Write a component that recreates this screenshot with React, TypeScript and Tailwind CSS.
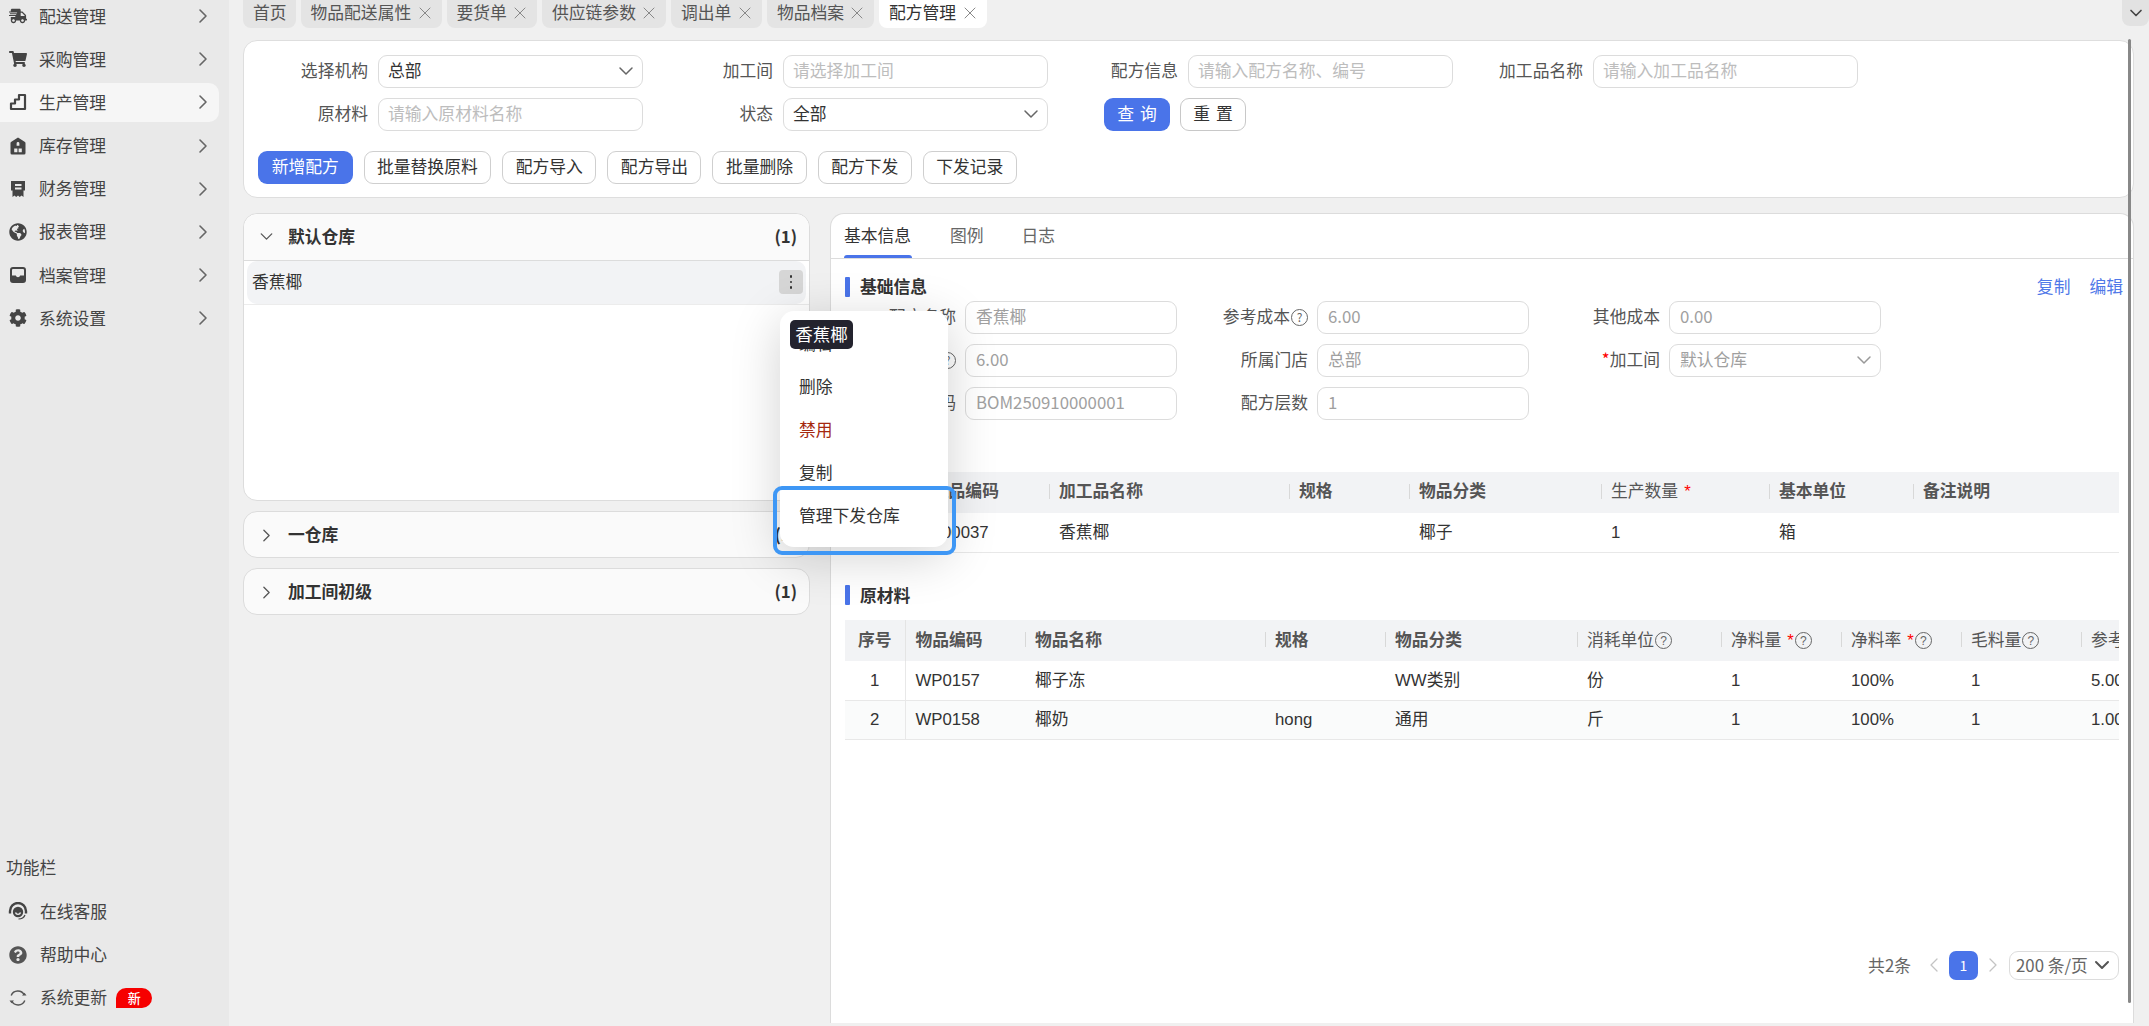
import { ChevronDown, ChevronLeft, ChevronRight, X } from "lucide-react";
import { FaShippingFast, FaShoppingCart, FaGlobeAmericas, FaCog, FaQuestionCircle } from "react-icons/fa";
import type { ReactNode } from "react";

const StairIcon = () => (
  <svg viewBox="0 0 18 18" className="h-[18px] w-[18px]" fill="none" stroke="currentColor" strokeWidth="2.2" strokeLinejoin="round">
    <path d="M2 10.500h4V6.500h4V2h6v14H2z" />
  </svg>
);

const HouseIcon = () => (
  <svg viewBox="0 0 18 18" className="h-[18px] w-[18px]" fill="currentColor">
    <path d="M9 0.500 2.400 4.800A1.500 1.500 0 0 0 1.500 6.200V16a1.500 1.500 0 0 0 1.500 1.500h12a1.500 1.500 0 0 0 1.500-1.500V6.200a1.500 1.500 0 0 0-.9-1.400zM7.600 6.500a1.400 1.400 0 0 1 2.800 0v2.200H7.600zM5.200 11.500h3.200v3.800H5.200zm4.400 0h3.200v3.800H9.600z" fillRule="evenodd" />
  </svg>
);

const LedgerIcon = () => (
  <svg viewBox="0 0 18 18" className="h-[18px] w-[18px]" fill="currentColor">
    <path d="M2 1h14v9.500h-1.500V17l-2-1.500-1.700 1.500-1.800-1.500L7.200 17l-1.700-1.500L3.500 17v-6.500H2zm4 3v2h6.500V4zm0 3.600v2h6.500v-2z" fillRule="evenodd" />
  </svg>
);

const TrayIcon = () => (
  <svg viewBox="0 0 18 18" className="h-[18px] w-[18px]" fill="currentColor">
    <path d="M4 1h10a3 3 0 0 1 3 3v10a3 3 0 0 1-3 3H4a3 3 0 0 1-3-3V4a3 3 0 0 1 3-3zm-1 8.500h3.800a2.300 2.300 0 0 0 4.400 0H15V4a1 1 0 0 0-1-1H4a1 1 0 0 0-1 1z" fillRule="evenodd" />
  </svg>
);

const HeadsetIcon = () => (
  <svg viewBox="0 0 20 20" className="h-[20px] w-[20px]" fill="none" stroke="currentColor">
    <path d="M2 11.500V9a8 8 0 0 1 16 0v2.500" strokeWidth="2.400" />
    <circle cx="10" cy="10" r="5.200" fill="currentColor" stroke="none" />
    <path d="M7.500 10.500a2.600 2.600 0 0 0 5 0" stroke="#e9e9e9" strokeWidth="1.400" />
    <path d="M17 13c-1 2.600-3.500 4-6.500 4" strokeWidth="1.200" />
  </svg>
);

const RefreshIcon = () => (
  <svg viewBox="0 0 20 20" className="h-[20px] w-[20px]" fill="none" stroke="currentColor" strokeWidth="1.500">
    <path d="M3.200 7.500A7.200 7.200 0 0 1 16.300 7M16.800 12.500A7.200 7.200 0 0 1 3.700 13" />
    <path d="M14 7.500h4.500L16.500 4.800zM6 12.500H1.500l2 2.700z" fill="currentColor" stroke="none" />
  </svg>
);

const HelpDot = () => (
  <span className="inline-flex h-[17px] w-[17px] shrink-0 items-center justify-center rounded-full border-[1.500px] border-[#666] text-[12px] leading-none text-[#666]">?</span>
);

const Req = ({ gap }: { gap?: boolean }) => <span className={`text-[#f00] ${gap ? "ml-[5px]" : ""}`}>*</span>;

const navItems: { label: string; icon: ReactNode; active?: boolean }[] = [
  { label: "配送管理", icon: <FaShippingFast className="h-[18px] w-[18px]" /> },
  { label: "采购管理", icon: <FaShoppingCart className="h-[18px] w-[18px]" /> },
  { label: "生产管理", icon: <StairIcon />, active: true },
  { label: "库存管理", icon: <HouseIcon /> },
  { label: "财务管理", icon: <LedgerIcon /> },
  { label: "报表管理", icon: <FaGlobeAmericas className="h-[18px] w-[18px]" /> },
  { label: "档案管理", icon: <TrayIcon /> },
  { label: "系统设置", icon: <FaCog className="h-[18px] w-[18px]" /> },
];

const Sidebar = () => (
  <aside className="flex h-full w-[229px] shrink-0 flex-col bg-[#e9e9e9] text-[#444]">
    <nav className="-mt-[5.500px] flex flex-col">
      {navItems.map((item) => (
        <div key={item.label} className="flex h-[43.200px] items-center">
          <div className={`flex h-[39px] w-[219px] items-center rounded-r-[10px] pl-[9px] pr-[4px] ${item.active ? "bg-[#f6f6f6]" : ""}`}>
            <span className="flex w-[30px] text-[#444]">{item.icon}</span>
            <span className="flex-1">{item.label}</span>
            <ChevronRight className="h-[24px] w-[24px] text-[#666]" strokeWidth={1.600} />
          </div>
        </div>
      ))}
    </nav>
    <div className="mt-auto pb-[7px]">
      <div className="flex h-[45px] items-center pl-[6px]">功能栏</div>
      <div className="flex h-[43px] items-center pl-[8px]">
        <span className="flex w-[32px]"><HeadsetIcon /></span>在线客服
      </div>
      <div className="flex h-[43px] items-center pl-[9px]">
        <span className="flex w-[31px]"><FaQuestionCircle className="h-[18px] w-[18px] text-[#555]" /></span>帮助中心
      </div>
      <div className="flex h-[43px] items-center pl-[8px]">
        <span className="flex w-[32px] text-[#555]"><RefreshIcon /></span>系统更新
        <span className="ml-[9px] flex h-[20px] w-[36px] items-center justify-center rounded-t-[10px] rounded-br-[10px] bg-[#f60000] text-[13px] font-medium text-white">新</span>
      </div>
    </div>
  </aside>
);

const tabs = [
  { label: "首页", width: "w-[52.500px]", closable: false },
  { label: "物品配送属性", width: "w-[141px]", closable: true },
  { label: "要货单", width: "w-[90.500px]", closable: true },
  { label: "供应链参数", width: "w-[124px]", closable: true },
  { label: "调出单", width: "w-[91px]", closable: true },
  { label: "物品档案", width: "w-[107px]", closable: true },
  { label: "配方管理", width: "w-[108px]", closable: true, active: true },
];

const TabBar = () => (
  <div className="flex h-[39.500px] items-start">
    <div className="flex flex-1 gap-[5px]">
      {tabs.map((t) => (
        <div
          key={t.label}
          className={`flex h-[28px] items-center justify-between whitespace-nowrap rounded-b-[8px] pb-[2px] pl-[10px] pr-[7px] ${t.width} ${t.active ? "bg-white text-[#333]" : "bg-[#e4e4e4] text-[#555]"}`}
        >
          <span>{t.label}</span>
          {t.closable && <X className="h-[20px] w-[20px] text-[#888]" strokeWidth={1.200} />}
        </div>
      ))}
    </div>
    <div className="flex h-[26px] w-[27px] items-center justify-center rounded-b-[8px] bg-[#e2e2e2]">
      <ChevronDown className="h-[20px] w-[20px] text-[#444]" strokeWidth={2} />
    </div>
  </div>
);

const Field = ({ placeholder, value, arrow, className }: { placeholder?: string; value?: string; arrow?: boolean; className: string }) => (
  <div className={`flex h-[33px] items-center justify-between rounded-[9px] border border-[#dcdcdc] bg-white pl-[9px] pr-[4px] ${className}`}>
    <span className={value ? "text-[#333]" : "text-[#bdbdbd]"}>{value ?? placeholder}</span>
    {arrow && <ChevronDown className="h-[24px] w-[24px] text-[#666]" strokeWidth={1.500} />}
  </div>
);

const FilterItem = ({ label, children }: { label: string; children: ReactNode }) => (
  <div className="flex items-center">
    <span className="w-[105px] whitespace-nowrap text-right text-[#555]">{label}</span>
    <span className="w-[10px]" />
    {children}
  </div>
);

const actionButtons = ["批量替换原料", "配方导入", "配方导出", "批量删除", "配方下发", "下发记录"];

const FilterCard = () => (
  <section className="mr-[15px] h-[158px] rounded-[14px] border border-[#dedede] bg-white pl-[14px] pt-[14px]">
    <div className="grid grid-cols-[405px_405px_405px_405px] gap-y-[10px] pl-[5px]">
      <FilterItem label="选择机构"><Field value="总部" arrow className="w-[265px]" /></FilterItem>
      <FilterItem label="加工间"><Field placeholder="请选择加工间" className="w-[265px]" /></FilterItem>
      <FilterItem label="配方信息"><Field placeholder="请输入配方名称、编号" className="w-[265px]" /></FilterItem>
      <FilterItem label="加工品名称"><Field placeholder="请输入加工品名称" className="w-[265px]" /></FilterItem>
      <FilterItem label="原材料"><Field placeholder="请输入原材料名称" className="w-[265px]" /></FilterItem>
      <FilterItem label="状态"><Field value="全部" arrow className="w-[265px]" /></FilterItem>
      <div className="flex items-center gap-[10px] pl-[31px]">
        <button className="h-[33px] w-[66px] rounded-[9px] bg-[#4a74e9] pl-[6px] tracking-[6px] text-white">查询</button>
        <button className="h-[33px] w-[66px] rounded-[9px] border border-[#c8c8c8] bg-white pl-[6px] tracking-[6px] text-[#333]">重置</button>
      </div>
    </div>
    <div className="mt-[20px] flex gap-[11px]">
      <button className="h-[33px] w-[94.500px] rounded-[9px] bg-[#4a74e9] text-white">新增配方</button>
      {actionButtons.map((b) => (
        <button key={b} className="h-[33px] rounded-[9px] border border-[#cfcfcf] bg-white px-[12.500px] text-[#333]">{b}</button>
      ))}
    </div>
  </section>
);

const MenuPopup = () => (
  <div className="absolute left-[537px] top-[98px] z-20 h-[236px] w-[168px] rounded-[14px] bg-white pl-[19px] pt-[11.500px] text-[#333] shadow-[0_10px_50px_rgba(0,0,0,0.18)]">
    <div className="flex h-[43px] items-center">编辑</div>
    <div className="flex h-[43px] items-center">删除</div>
    <div className="flex h-[43px] items-center text-[#a5280f]">禁用</div>
    <div className="flex h-[43px] items-center">复制</div>
    <div className="flex h-[43px] items-center">管理下发仓库</div>
    <div className="absolute left-[10px] top-[9px] flex h-[29px] w-[63px] items-center justify-center rounded-[5px] bg-[#23232e] text-[17.500px] text-white">香蕉椰</div>
    <div className="absolute -bottom-[8px] -left-[7px] -right-[8px] h-[69px] rounded-[9px] border-[4px] border-[#3e97f5]" />
  </div>
);

const groups = ["一仓库", "加工间初级"];

const LeftPanel = () => (
  <div className="relative flex w-[567px] shrink-0 flex-col gap-[10px]">
    <div className="h-[288px] rounded-[14px] border border-[#dcdcdc] bg-white">
      <div className="flex h-[47px] items-center justify-between rounded-t-[14px] border-b border-[#dcdcdc] bg-[#fafafa] pl-[11.500px] pr-[12px]">
        <div className="flex items-center font-bold text-[#333]">
          <ChevronDown className="mr-[11.500px] h-[21px] w-[21px] text-[#555]" strokeWidth={1.500} />
          默认仓库
        </div>
        <span className="font-bold text-[#333]">(1)</span>
      </div>
      <div className="flex h-[44px] items-center justify-between border-b border-[#ececec]">
        <div className="mx-[3px] flex h-[43px] flex-1 items-center justify-between rounded-[10px] bg-[#f2f3f5] pl-[5px] pr-[3px]">
          <span>香蕉椰</span>
          <span className="flex h-[24px] w-[24px] flex-col items-center justify-center gap-[3px] rounded-[4px] bg-[#d6d6d6]">
            <i className="h-[2.500px] w-[2.500px] rounded-full bg-[#333]" />
            <i className="h-[2.500px] w-[2.500px] rounded-full bg-[#333]" />
            <i className="h-[2.500px] w-[2.500px] rounded-full bg-[#333]" />
          </span>
        </div>
      </div>
    </div>
    {groups.map((g) => (
      <div key={g} className="flex h-[47px] items-center justify-between rounded-[14px] border border-[#dcdcdc] bg-[#fafafa] pl-[11.500px] pr-[12px] pt-[2px]">
        <div className="flex items-center font-bold text-[#333]">
          <ChevronRight className="mr-[11.500px] h-[21px] w-[21px] text-[#555]" strokeWidth={1.500} />
          {g}
        </div>
        <span className="font-bold text-[#333]">(1)</span>
      </div>
    ))}
    <MenuPopup />
  </div>
);

const SectionTitle = ({ children }: { children: ReactNode }) => (
  <div className="flex items-center font-bold text-[#333]">
    <span className="mr-[10px] h-[20px] w-[5px] rounded-[1px] bg-[#4a74e9]" />
    {children}
  </div>
);

const FormRow = ({ label, value, arrow }: { label: ReactNode; value: string; arrow?: boolean }) => (
  <div className="flex w-[352px] items-center justify-end pr-[20px]">
    <span className="flex items-center justify-end whitespace-nowrap text-[#555]">{label}</span>
    <div className="ml-[9px] flex h-[33px] w-[212px] shrink-0 items-center justify-between rounded-[9px] border border-[#dcdcdc] pl-[10px] pr-[4px] text-[#a0a0a0]">
      <span>{value}</span>
      {arrow && <ChevronDown className="h-[24px] w-[24px] text-[#999]" strokeWidth={1.500} />}
    </div>
  </div>
);

const Th = ({ children, first, center }: { children?: ReactNode; first?: boolean; center?: boolean }) => (
  <th className={`relative whitespace-nowrap text-left font-bold text-[#555] ${center ? "text-center" : "pl-[10px]"}`}>
    {!first && <span className="absolute left-0 top-[12px] h-[15px] w-px bg-[#d8d8d8]" />}
    {children}
  </th>
);

const ThLight = ({ children }: { children: ReactNode }) => (
  <th className="relative whitespace-nowrap pl-[10px] text-left font-normal text-[#555]">
    <span className="absolute left-0 top-[12px] h-[15px] w-px bg-[#d8d8d8]" />
    <span className="inline-flex items-center gap-[1px]">{children}</span>
  </th>
);

const OutputTable = () => (
  <table className="w-[1274px] table-fixed border-collapse">
    <colgroup>
      <col className="w-[60px]" />
      <col className="w-[144px]" />
      <col className="w-[240px]" />
      <col className="w-[120px]" />
      <col className="w-[192px]" />
      <col className="w-[168px]" />
      <col className="w-[144px]" />
      <col className="w-[206px]" />
    </colgroup>
    <thead>
      <tr className="h-[41px] bg-[#f2f3f5]">
        <Th first center>序号</Th>
        <Th>加工品编码</Th>
        <Th>加工品名称</Th>
        <Th>规格</Th>
        <Th>物品分类</Th>
        <ThLight>生产数量<Req gap /></ThLight>
        <Th>基本单位</Th>
        <Th>备注说明</Th>
      </tr>
    </thead>
    <tbody>
      <tr className="h-[40px] border-b border-[#e8e8e8] text-[#333]">
        <td className="text-center">1</td>
        <td className="pl-[10px]">WP00037</td>
        <td className="pl-[10px]">香蕉椰</td>
        <td className="pl-[10px]" />
        <td className="pl-[10px]">椰子</td>
        <td className="pl-[10px]">1</td>
        <td className="pl-[10px]">箱</td>
        <td className="pl-[10px]" />
      </tr>
    </tbody>
  </table>
);

const materials = [
  { no: 1, code: "WP0157", name: "椰子冻", spec: "", cat: "WW类别", unit: "份", cost: "5.00" },
  { no: 2, code: "WP0158", name: "椰奶", spec: "hong", cat: "通用", unit: "斤", cost: "1.00" },
];

const MaterialTable = () => (
  <table className="w-[1354px] table-fixed border-collapse">
    <colgroup>
      <col className="w-[60px]" />
      <col className="w-[120px]" />
      <col className="w-[240px]" />
      <col className="w-[120px]" />
      <col className="w-[192px]" />
      <col className="w-[144px]" />
      <col className="w-[120px]" />
      <col className="w-[120px]" />
      <col className="w-[120px]" />
      <col className="w-[118px]" />
    </colgroup>
    <thead>
      <tr className="h-[41px] bg-[#f2f3f5]">
        <th className="border-r border-[#e4e4e4] text-center font-bold text-[#555]">序号</th>
        <th className="pl-[10px] text-left font-bold text-[#555]">物品编码</th>
        <Th>物品名称</Th>
        <Th>规格</Th>
        <Th>物品分类</Th>
        <ThLight>消耗单位<HelpDot /></ThLight>
        <ThLight>净料量<Req gap /><HelpDot /></ThLight>
        <ThLight>净料率<Req gap /><HelpDot /></ThLight>
        <ThLight>毛料量<HelpDot /></ThLight>
        <ThLight>参考成本</ThLight>
      </tr>
    </thead>
    <tbody>
      {materials.map((m) => (
        <tr key={m.no} className={`h-[39px] border-b border-[#e8e8e8] text-[#333] ${m.no === 2 ? "bg-[#fafbfb]" : ""}`}>
          <td className="border-r border-[#e8e8e8] text-center">{m.no}</td>
          <td className="pl-[10px]">{m.code}</td>
          <td className="pl-[10px]">{m.name}</td>
          <td className="pl-[10px]">{m.spec}</td>
          <td className="pl-[10px]">{m.cat}</td>
          <td className="pl-[10px]">{m.unit}</td>
          <td className="pl-[10px]">1</td>
          <td className="pl-[10px]">100%</td>
          <td className="pl-[10px]">1</td>
          <td className="pl-[10px]">{m.cost}</td>
        </tr>
      ))}
    </tbody>
  </table>
);

const Pagination = () => (
  <div className="flex items-center justify-end text-[#666]">
    <span>共2条</span>
    <ChevronLeft className="ml-[11px] h-[24px] w-[24px] text-[#c4c4c4]" strokeWidth={1.300} />
    <span className="ml-[3px] flex h-[29px] w-[29px] items-center justify-center rounded-[7px] bg-[#4a74e9] text-[14px] text-white">1</span>
    <ChevronRight className="ml-[3px] h-[24px] w-[24px] text-[#c4c4c4]" strokeWidth={1.300} />
    <div className="ml-[4px] flex h-[29px] w-[110px] items-center justify-between rounded-[9px] border border-[#dcdcdc] pl-[6px] pr-[4px]">
      <span className="whitespace-nowrap">200 条/页</span>
      <ChevronDown className="h-[24px] w-[24px] text-[#555]" strokeWidth={2} />
    </div>
  </div>
);

const DetailPanel = () => (
  <section className="ml-[20px] flex flex-1 flex-col overflow-hidden rounded-t-[14px] border-x border-t border-[#dcdcdc] bg-white">
    <div className="flex h-[45px] shrink-0 items-start gap-[38px] border-b border-[#dcdcdc] pl-[13px] pt-[9px] text-[#666]">
      <div className="relative h-[35px] w-[68px] whitespace-nowrap text-[#333]">
        基本信息
        <span className="absolute bottom-0 left-0 h-[3px] w-[68px] rounded-t-[3px] bg-[#4a74e9]" />
      </div>
      <span>图例</span>
      <span>日志</span>
    </div>
    <div className="flex flex-1 flex-col pl-[14px] pr-[10px]">
      <div className="mt-[18px] flex h-[20px] items-center justify-between">
        <SectionTitle>基础信息</SectionTitle>
        <div className="flex gap-[19px] text-[#4f78e8]">
          <span>复制</span>
          <span>编辑</span>
        </div>
      </div>
      <div className="mt-[4px] flex flex-wrap gap-y-[10px]">
        <FormRow label="配方名称" value="香蕉椰" />
        <FormRow label={<>参考成本<span className="ml-[1px] flex"><HelpDot /></span></>} value="6.00" />
        <FormRow label="其他成本" value="0.00" />
        <FormRow label={<>配方成本<span className="ml-[1px] flex"><HelpDot /></span></>} value="6.00" />
        <FormRow label="所属门店" value="总部" />
        <FormRow label={<><Req />加工间</>} value="默认仓库" arrow />
        <FormRow label="配方编码" value="BOM250910000001" />
        <FormRow label="配方层数" value="1" />
      </div>
      <div className="mt-[52px] w-[1274px]"><OutputTable /></div>
      <div className="mt-[29.500px]"><SectionTitle>原材料</SectionTitle></div>
      <div className="mt-[12.500px] w-[1274px] overflow-hidden"><MaterialTable /></div>
      <div className="mt-[211px] w-[1274px]"><Pagination /></div>
    </div>
  </section>
);

export default function App() {
  return (
    <div className="flex h-[1026px] w-[2149px] overflow-hidden bg-[#f0f0f0] font-['Noto_Sans_CJK_SC',sans-serif] text-[16.800px] leading-normal text-[#333] [&_table]:font-['Liberation_Sans','Noto_Sans_CJK_SC',sans-serif]">
      <Sidebar />
      <main className="relative flex min-w-0 flex-1 flex-col pl-[14px]">
        <TabBar />
        <FilterCard />
        <div className="mr-[15px] mt-[15px] flex h-[810px]">
          <LeftPanel />
          <DetailPanel />
        </div>
        <div className="absolute right-[18px] top-[39px] h-[964px] w-[3px] rounded-full bg-[#888]" />
      </main>
    </div>
  );
}
